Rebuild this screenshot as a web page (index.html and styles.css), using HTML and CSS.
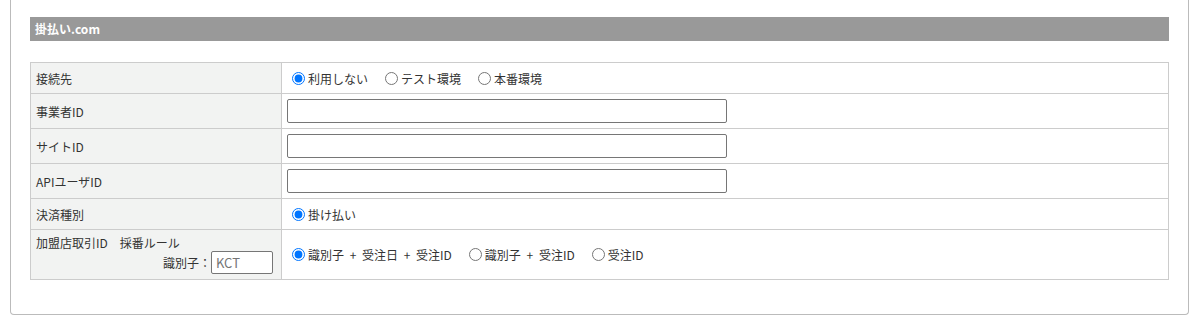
FILE: index.html
```html
<!DOCTYPE html>
<html lang="ja">
<head>
    <meta charset="UTF-8">
    <meta name="viewport" content="width=device-width, initial-scale=1.0">
    <title>掛払い.com 設定</title>
    <link rel="stylesheet" href="styles.css">
</head>
<body>
    <div class="settings-box">
        <h3 class="section-title">掛払い.com</h3>
        <table class="form-table">
            <tr>
                <th>接続先</th>
                <td>
                    <div class="radios">
                        <label><input type="radio" name="connect" checked>利用しない</label>
                        <label><input type="radio" name="connect">テスト環境</label>
                        <label><input type="radio" name="connect">本番環境</label>
                    </div>
                </td>
            </tr>
            <tr>
                <th>事業者ID</th>
                <td><input type="text" class="text-input"></td>
            </tr>
            <tr>
                <th>サイトID</th>
                <td><input type="text" class="text-input"></td>
            </tr>
            <tr>
                <th>APIユーザID</th>
                <td><input type="text" class="text-input"></td>
            </tr>
            <tr>
                <th>決済種別</th>
                <td>
                    <div class="radios">
                        <label><input type="radio" name="paytype" checked>掛け払い</label>
                    </div>
                </td>
            </tr>
            <tr>
                <th class="top">
                    <div class="rule-title">加盟店取引ID　採番ルール</div>
                    <div class="prefix-row">識別子：<input type="text" class="prefix-input" placeholder="KCT"></div>
                </th>
                <td>
                    <div class="radios wide">
                        <label><input type="radio" name="rule" checked>識別子 + 受注日 + 受注ID</label>
                        <label><input type="radio" name="rule">識別子 + 受注ID</label>
                        <label><input type="radio" name="rule">受注ID</label>
                    </div>
                </td>
            </tr>
        </table>
    </div>
</body>
</html>
```

FILE: styles.css
```css
body {
    margin: 0;
    font-family: "Noto Sans CJK JP", "Liberation Sans", sans-serif;
    font-size: 12px;
    color: #333;
    background: #fff;
}
.settings-box {
    margin-left: 10px;
    width: 1179px;
    box-sizing: border-box;
    border: 1px solid #bbb;
    border-top: none;
    border-radius: 0 0 4px 4px;
    padding: 17px 19px 34px 19px;
}
.section-title {
    margin: 0 0 21px 0;
    height: 24px;
    line-height: 24px;
    padding-left: 5px;
    background: #999;
    color: #fff;
    font-size: 12px;
    font-weight: bold;
}
.form-table {
    width: 100%;
    border-collapse: collapse;
    table-layout: fixed;
}
.form-table th,
.form-table td {
    border: 1px solid #ccc;
    padding: 5px;
    text-align: left;
    vertical-align: middle;
    font-weight: normal;
}
.form-table th {
    width: 240px;
    background: #f2f3f2;
}
.form-table th.top {
    vertical-align: top;
}
.radios {
    display: flex;
    align-items: center;
    height: 20px;
}
.radios label {
    display: flex;
    align-items: center;
    margin-right: 12px;
    white-space: pre;
}
.radios.wide label {
    word-spacing: 3px;
}
.radios input {
    margin: 0 3px 0 5px;
    width: 13px;
    height: 13px;
}
.text-input {
    display: block;
    width: 440px;
    height: 24px;
    box-sizing: border-box;
    border: 1px solid #767676;
    border-radius: 2px;
    margin: 0;
}
.rule-title {
    line-height: 16px;
}
.prefix-row {
    display: flex;
    justify-content: flex-end;
    align-items: center;
    padding-right: 3px;
}
.prefix-input {
    width: 62px;
    height: 23px;
    box-sizing: border-box;
    border: 1px solid #767676;
    border-radius: 2px;
    margin: 0;
    padding: 0 4px;
    font-family: "Noto Sans CJK JP", "Liberation Sans", sans-serif;
    font-size: 13px;
}
.prefix-input::placeholder {
    color: #757575;
}
```
